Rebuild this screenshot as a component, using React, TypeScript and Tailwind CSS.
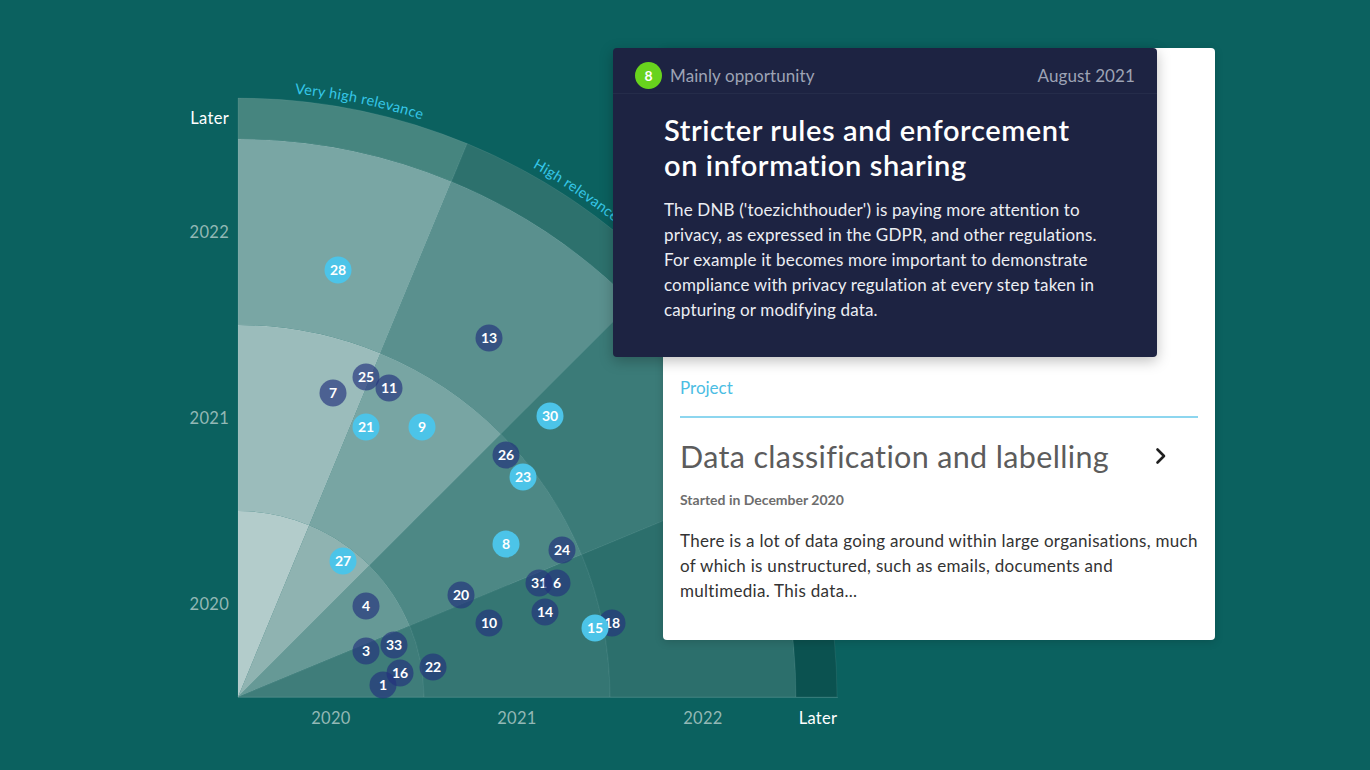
import React from "react";

const OX = 238;
const OY = 697;
const P = (r: number, deg: number): [number, number] => {
  const a = (deg * Math.PI) / 180;
  return [OX + r * Math.cos(a), OY - r * Math.sin(a)];
};
const f = (n: number) => n.toFixed(2);

function cell(r1: number, r2: number, a1: number, a2: number) {
  const [x1, y1] = P(r2, a1);
  const [x2, y2] = P(r2, a2);
  if (r1 === 0) {
    return `M${OX} ${OY} L${f(x1)} ${f(y1)} A${r2} ${r2} 0 0 0 ${f(x2)} ${f(y2)} Z`;
  }
  const [x3, y3] = P(r1, a2);
  const [x4, y4] = P(r1, a1);
  return `M${f(x1)} ${f(y1)} A${r2} ${r2} 0 0 0 ${f(x2)} ${f(y2)} L${f(x3)} ${f(y3)} A${r1} ${r1} 0 0 1 ${f(x4)} ${f(y4)} Z`;
}

const radii = [0, 186, 372, 558, 599];
const sectors: [number, number][] = [
  [67.5, 90],
  [45, 67.5],
  [22.5, 45],
  [0, 22.5],
];
const colors = [
  ["#b3cccb", "#9bbcbb", "#79a6a4", "#46857f"],
  ["#8fb3b1", "#78a5a3", "#5a908e", "#2d716d"],
  ["#669996", "#4d8885", "#3b7b78", "#246a67"],
  ["#3f7d7a", "#357673", "#2c6f6c", "#0b5250"],
];

type Dot = { n: number; x: number; y: number; light?: boolean };
const dots: Dot[] = [
  { n: 28, x: 338, y: 270, light: true },
  { n: 13, x: 489, y: 338 },
  { n: 7, x: 333, y: 393 },
  { n: 25, x: 366, y: 377 },
  { n: 11, x: 389, y: 388 },
  { n: 30, x: 550, y: 416, light: true },
  { n: 21, x: 366, y: 427, light: true },
  { n: 9, x: 422, y: 427, light: true },
  { n: 26, x: 506, y: 455 },
  { n: 23, x: 523, y: 477, light: true },
  { n: 8, x: 506, y: 544, light: true },
  { n: 24, x: 562, y: 550 },
  { n: 27, x: 343, y: 561, light: true },
  { n: 31, x: 539, y: 583 },
  { n: 6, x: 557, y: 583 },
  { n: 20, x: 461, y: 595 },
  { n: 4, x: 366, y: 606 },
  { n: 14, x: 545, y: 612 },
  { n: 10, x: 489, y: 623 },
  { n: 18, x: 612, y: 623 },
  { n: 15, x: 595, y: 628, light: true },
  { n: 3, x: 366, y: 651 },
  { n: 33, x: 394, y: 645 },
  { n: 22, x: 433, y: 667 },
  { n: 1, x: 383, y: 685 },
  { n: 16, x: 400, y: 673 },
];

const LR = 606;
const [lx1, ly1] = P(LR, 90);
const [lx2, ly2] = P(LR, 0);
const labelArc = `M${f(lx1)} ${f(ly1)} A${LR} ${LR} 0 0 1 ${f(lx2)} ${f(ly2)}`;

function Chart() {
  return (
    <svg
      className="block"
      width={700}
      height={700}
      viewBox="170 60 700 700"
      xmlns="http://www.w3.org/2000/svg"
    >
      <defs>
        <path id="lblArc" d={labelArc} />
      </defs>
      {sectors.map(([a1, a2], si) =>
        [0, 1, 2, 3].map((ri) => (
          <path
            key={`${si}-${ri}`}
            d={cell(radii[ri], radii[ri + 1], a1, a2)}
            fill={colors[si][ri]}
            stroke="rgba(255,255,255,0.07)"
            strokeWidth={1}
          />
        ))
      )}
      <line x1={238} y1={697.5} x2={838} y2={697.5} stroke="rgba(255,255,255,0.14)" strokeWidth={1} />

      {[
        ["Very high relevance", "12.8%"],
        ["High relevance", "37.5%"],
      ].map(([t, o]) => (
        <text key={t} fontSize={14.5} fill="#36c7e8" fontFamily="Lato, sans-serif" letterSpacing={0.3}>
          <textPath href="#lblArc" startOffset={o} textAnchor="middle">
            {t}
          </textPath>
        </text>
      ))}

      {/* Y axis labels */}
      <g fontFamily="Lato, sans-serif" fontSize={16.5} textAnchor="end" letterSpacing={0.3}>
        <text x={229} y={124} fill="#ffffff">Later</text>
        <text x={229} y={238} fill="#93b8b5">2022</text>
        <text x={229} y={424} fill="#93b8b5">2021</text>
        <text x={229} y={610} fill="#93b8b5">2020</text>
      </g>
      {/* X axis labels */}
      <g fontFamily="Lato, sans-serif" fontSize={16.5} textAnchor="middle" letterSpacing={0.3}>
        <text x={331} y={724} fill="#93b8b5">2020</text>
        <text x={517} y={724} fill="#93b8b5">2021</text>
        <text x={703} y={724} fill="#93b8b5">2022</text>
        <text x={818} y={724} fill="#ffffff">Later</text>
      </g>

      {dots.map((d) => (
        <g key={d.n}>
          <circle
            cx={d.x}
            cy={d.y}
            r={13.5}
            fill={d.light ? "#4cc4e8" : "#23327d"}
            fillOpacity={d.light ? 1 : 0.66}
          />
          <text
            x={d.x}
            y={d.y + 5}
            textAnchor="middle"
            fontFamily="Lato, sans-serif"
            fontWeight={700}
            fontSize={14}
            fill="#ffffff"
          >
            {d.n}
          </text>
        </g>
      ))}
    </svg>
  );
}

function ProjectCard() {
  return (
    <div className="absolute left-[663px] top-[48px] w-[552px] h-[592px] rounded-[4px] bg-white shadow-[0_2px_8px_rgba(0,0,0,0.15)] px-[17px] pt-[328px]">
      <div className="text-[17px] leading-[24px] text-[#4bbde3]">Project</div>
      <div className="mt-[16px] h-[2px] bg-[#8dd6ef]" />
      <div className="mt-[20px] flex items-center justify-between">
        <div className="text-[30.5px] leading-[36px] text-[#5c5c5c] tracking-[0.35px] whitespace-nowrap">
          Data classification and labelling
        </div>
        <svg width="14" height="18" viewBox="0 0 14 18" className="mr-[30px]">
          <polyline
            points="3.5,2.5 10,9 3.5,15.5"
            fill="none"
            stroke="#1f1f1f"
            strokeWidth="2.6"
            strokeLinecap="round"
            strokeLinejoin="round"
          />
        </svg>
      </div>
      <div className="mt-[17px] text-[14px] leading-[18px] font-bold text-[#6d6d6d]">
        Started in December 2020
      </div>
      <p className="mt-[19px] text-[17px] leading-[25px] tracking-[0.3px] text-[#333333] whitespace-nowrap">
        There is a lot of data going around within large organisations, much
        <br />
        of which is unstructured, such as emails, documents and
        <br />
        multimedia. This data...
      </p>
    </div>
  );
}

function TrendCard() {
  return (
    <div className="absolute left-[613px] top-[48px] w-[544px] h-[309px] rounded-[4px] bg-[#1d2342] shadow-[0_4px_14px_rgba(0,0,0,0.25)] flex flex-col">
      <div className="flex items-center justify-between pl-[22px] pr-[22px] pt-[14px] pb-[4px] border-b border-[#252c4a]">
        <div className="flex items-center gap-[8px]">
          <div className="w-[27px] h-[27px] rounded-full bg-[#68d31d] flex items-center justify-center text-[14px] font-bold text-white">
            8
          </div>
          <span className="text-[17px] leading-[24px] tracking-[0.1px] text-[#9ea3b5]">Mainly opportunity</span>
        </div>
        <span className="text-[17px] leading-[24px] tracking-[0.1px] text-[#9ea3b5]">August 2021</span>
      </div>
      <div className="px-[51px] pt-[18px]">
        <h2 className="text-[29px] leading-[35px] font-semibold text-white tracking-[0.6px] whitespace-nowrap">
          Stricter rules and enforcement
          <br />
          on information sharing
        </h2>
        <p className="mt-[15px] text-[17px] leading-[25px] tracking-[0.15px] text-[#eceef3] whitespace-nowrap">
          The DNB ('toezichthouder') is paying more attention to
          <br />
          privacy, as expressed in the GDPR, and other regulations.
          <br />
          For example it becomes more important to demonstrate
          <br />
          compliance with privacy regulation at every step taken in
          <br />
          capturing or modifying data.
        </p>
      </div>
    </div>
  );
}

export default function App() {
  return (
    <div className="relative w-[1370px] h-[770px] overflow-hidden bg-[#0b615f] pl-[170px] pt-[60px] font-[Lato,sans-serif]">
      <Chart />
      <ProjectCard />
      <TrendCard />
    </div>
  );
}
